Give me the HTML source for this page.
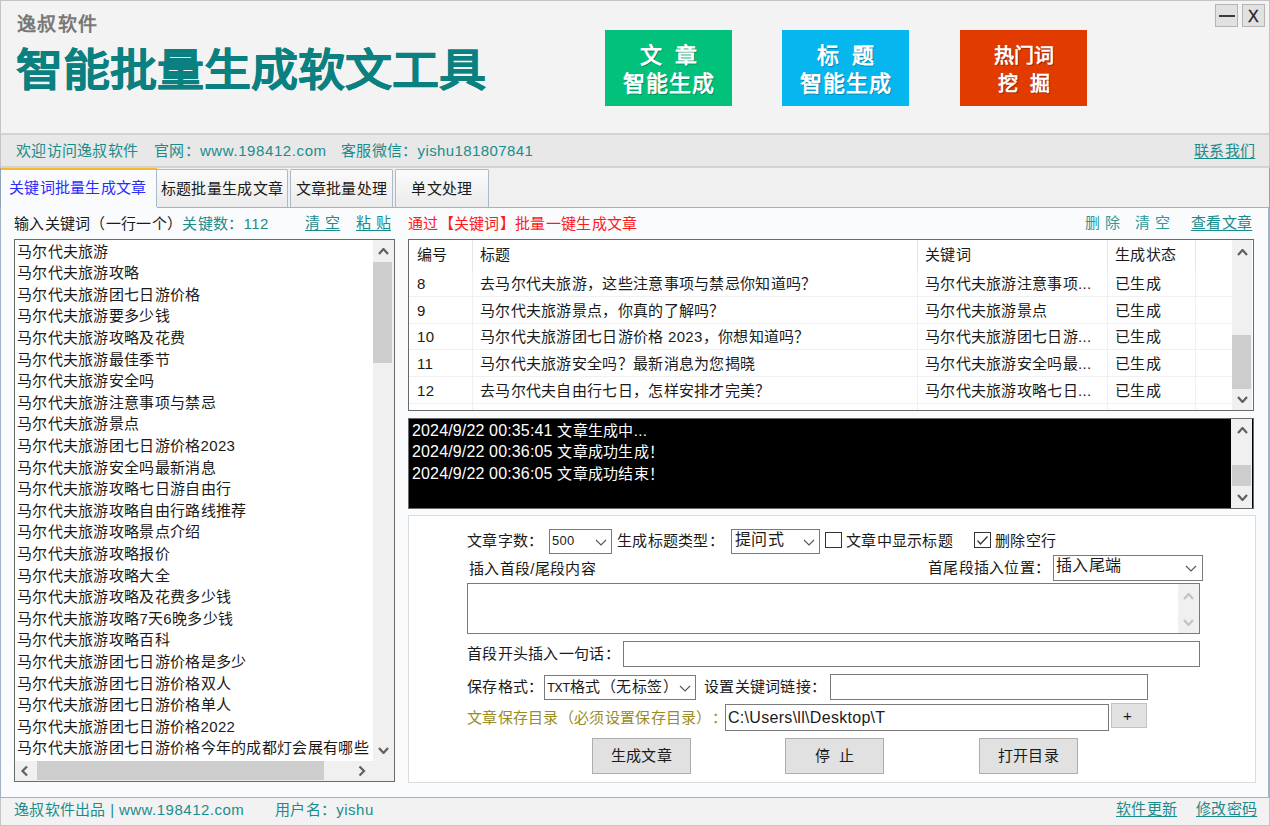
<!DOCTYPE html><html lang="zh-CN"><head><meta charset="utf-8"><style>
*{margin:0;padding:0;box-sizing:border-box}
html,body{width:1270px;height:826px;overflow:hidden;background:#f3f3f3;font-family:"Liberation Sans",sans-serif;color:#1a1a1a;text-spacing-trim:space-all}
.t{position:absolute;white-space:nowrap;font-size:15px;line-height:16px;letter-spacing:0.3px}
.r{position:absolute}
.teal{color:#1b8c8c}
.u{text-decoration:underline;text-underline-offset:2px;text-decoration-thickness:1.3px}
</style></head><body>
<div class="r" style="left:0px;top:0px;width:1270px;height:826px;border:1px solid #c4c4c4"></div>
<div class="t " style="left:17px;top:14.5px;font-size:19px;line-height:20px;color:#787878;letter-spacing:1.3px;font-weight:bold">逸叔软件</div>
<div class="t " style="left:16px;top:45.5px;font-size:47px;line-height:47px;font-weight:900;letter-spacing:0;color:#0b8080;-webkit-text-stroke:0.4px #0b8080;transform:scaleY(0.94);transform-origin:0 46px">智能批量生成软文工具</div>
<div class="r" style="left:605px;top:30px;width:127px;height:76px;background:#02c27b"></div>
<div class="r" style="left:782px;top:30px;width:127px;height:76px;background:#06b7ef"></div>
<div class="r" style="left:960px;top:30px;width:127px;height:76px;background:#e23b00"></div>
<div style="position:absolute;white-space:nowrap;color:#fff;font-weight:900;line-height:24px;text-shadow:1px 1px 0 rgba(0,0,0,0.28);left:605px;top:43.5px;width:127px;text-align:center;font-size:22px;letter-spacing:1px;text-indent:1px">文&ensp;章</div>
<div style="position:absolute;white-space:nowrap;color:#fff;font-weight:900;line-height:24px;text-shadow:1px 1px 0 rgba(0,0,0,0.28);left:605px;top:71.5px;width:127px;text-align:center;font-size:22px;letter-spacing:1px;text-indent:1px">智能生成</div>
<div style="position:absolute;white-space:nowrap;color:#fff;font-weight:900;line-height:24px;text-shadow:1px 1px 0 rgba(0,0,0,0.28);left:782px;top:43.5px;width:127px;text-align:center;font-size:22px;letter-spacing:1px;text-indent:1px">标&ensp;题</div>
<div style="position:absolute;white-space:nowrap;color:#fff;font-weight:900;line-height:24px;text-shadow:1px 1px 0 rgba(0,0,0,0.28);left:782px;top:71.5px;width:127px;text-align:center;font-size:22px;letter-spacing:1px;text-indent:1px">智能生成</div>
<div style="position:absolute;white-space:nowrap;color:#fff;font-weight:900;line-height:24px;text-shadow:1px 1px 0 rgba(0,0,0,0.28);left:960px;top:44.0px;width:127px;text-align:center;font-size:20px;letter-spacing:0px">热门词</div>
<div style="position:absolute;white-space:nowrap;color:#fff;font-weight:900;line-height:24px;text-shadow:1px 1px 0 rgba(0,0,0,0.28);left:960px;top:72.0px;width:127px;text-align:center;font-size:20px;letter-spacing:1px;text-indent:1px">挖&ensp;掘</div>
<div class="r" style="left:1215px;top:4px;width:23px;height:23px;background:#e1e1e1;border:1px solid #b5b5b5"></div>
<div class="r" style="left:1219px;top:15px;width:16px;height:2px;background:#3a3a3a"></div>
<div class="r" style="left:1242px;top:4px;width:23px;height:23px;background:#e1e1e1;border:1px solid #b5b5b5"></div>
<div class="t " style="left:1248px;top:9px;font-size:16px;line-height:16px;color:#222;-webkit-text-stroke:0.3px #222">X</div>
<div class="r" style="left:1px;top:133px;width:1268px;height:2px;background:#d3d3d3"></div>
<div class="r" style="left:1px;top:135px;width:1268px;height:31px;background:#e8e8e8"></div>
<div class="r" style="left:1px;top:166px;width:1268px;height:2px;background:#d3d3d3"></div>
<div class="t teal" style="left:16px;top:143px;">欢迎访问逸叔软件</div>
<div class="t teal" style="left:154px;top:143px;">官网：<span style='letter-spacing:0.6px'>www.198412.com</span></div>
<div class="t teal" style="left:341px;top:143px;">客服微信：<span style='letter-spacing:0.4px'>yishu181807841</span></div>
<div class="t teal u" style="left:1194px;top:143px;">联系我们</div>
<div class="r" style="left:1px;top:168px;width:1268px;height:39px;background:#f0f0f0"></div>
<div class="r" style="left:0px;top:207px;width:1270px;height:591px;background:#fafbfd;border:1px solid #a0b2c4;border-right-width:2px"></div>
<div class="r" style="left:0px;top:168px;width:1px;height:40px;background:#90a4b7"></div>
<div class="r" style="left:1269px;top:168px;width:1px;height:40px;background:#90a4b7"></div>
<div class="r" style="left:1px;top:168px;width:156px;height:40px;background:#fafbfd;border-top:2px solid #f6b82c"></div>
<div class="t " style="left:9px;top:179.5px;color:#2b2bff">关键词批量生成文章</div>
<div class="r" style="left:156px;top:169px;width:132px;height:38px;background:linear-gradient(#fbfbfb,#ebebeb);border:1px solid #a9bacb;border-bottom:none;border-radius:2px 2px 0 0"></div>
<div class="r" style="left:156px;top:181px;width:132px;text-align:center;font-size:15px;letter-spacing:0.3px;line-height:16px;white-space:nowrap">标题批量生成文章</div>
<div class="r" style="left:290px;top:169px;width:103px;height:38px;background:linear-gradient(#fbfbfb,#ebebeb);border:1px solid #a9bacb;border-bottom:none;border-radius:2px 2px 0 0"></div>
<div class="r" style="left:290px;top:181px;width:103px;text-align:center;font-size:15px;letter-spacing:0.3px;line-height:16px;white-space:nowrap">文章批量处理</div>
<div class="r" style="left:395px;top:169px;width:94px;height:38px;background:linear-gradient(#fbfbfb,#ebebeb);border:1px solid #a9bacb;border-bottom:none;border-radius:2px 2px 0 0"></div>
<div class="r" style="left:395px;top:181px;width:94px;text-align:center;font-size:15px;letter-spacing:0.3px;line-height:16px;white-space:nowrap">单文处理</div>
<div class="t " style="left:14px;top:216px;">输入关键词（一行一个）<span class='teal'>关键数：<span style='letter-spacing:0.5px'>112</span></span></div>
<div class="t teal u" style="left:305px;top:215px;">清 空</div>
<div class="t teal u" style="left:356px;top:215px;">粘 贴</div>
<div class="r" style="left:14px;top:239px;width:381px;height:543px;background:#fff;border:1px solid #6a6a6a"></div>
<div class="r" style="left:15px;top:240px;width:358px;height:521px;overflow:hidden"><div class="t " style="left:2px;top:3.5px;">马尔代夫旅游</div>
<div class="t " style="left:2px;top:25.1px;">马尔代夫旅游攻略</div>
<div class="t " style="left:2px;top:46.7px;">马尔代夫旅游团七日游价格</div>
<div class="t " style="left:2px;top:68.30000000000001px;">马尔代夫旅游要多少钱</div>
<div class="t " style="left:2px;top:89.9px;">马尔代夫旅游攻略及花费</div>
<div class="t " style="left:2px;top:111.5px;">马尔代夫旅游最佳季节</div>
<div class="t " style="left:2px;top:133.10000000000002px;">马尔代夫旅游安全吗</div>
<div class="t " style="left:2px;top:154.70000000000002px;">马尔代夫旅游注意事项与禁忌</div>
<div class="t " style="left:2px;top:176.3px;">马尔代夫旅游景点</div>
<div class="t " style="left:2px;top:197.9px;">马尔代夫旅游团七日游价格2023</div>
<div class="t " style="left:2px;top:219.5px;">马尔代夫旅游安全吗最新消息</div>
<div class="t " style="left:2px;top:241.10000000000002px;">马尔代夫旅游攻略七日游自由行</div>
<div class="t " style="left:2px;top:262.70000000000005px;">马尔代夫旅游攻略自由行路线推荐</div>
<div class="t " style="left:2px;top:284.3px;">马尔代夫旅游攻略景点介绍</div>
<div class="t " style="left:2px;top:305.90000000000003px;">马尔代夫旅游攻略报价</div>
<div class="t " style="left:2px;top:327.5px;">马尔代夫旅游攻略大全</div>
<div class="t " style="left:2px;top:349.1px;">马尔代夫旅游攻略及花费多少钱</div>
<div class="t " style="left:2px;top:370.70000000000005px;">马尔代夫旅游攻略7天6晚多少钱</div>
<div class="t " style="left:2px;top:392.3px;">马尔代夫旅游攻略百科</div>
<div class="t " style="left:2px;top:413.90000000000003px;">马尔代夫旅游团七日游价格是多少</div>
<div class="t " style="left:2px;top:435.5px;">马尔代夫旅游团七日游价格双人</div>
<div class="t " style="left:2px;top:457.1px;">马尔代夫旅游团七日游价格单人</div>
<div class="t " style="left:2px;top:478.70000000000005px;">马尔代夫旅游团七日游价格2022</div>
<div class="t " style="left:2px;top:500.3px;">马尔代夫旅游团七日游价格今年的成都灯会展有哪些</div>
</div><div class="r" style="left:373px;top:240px;width:21px;height:541px;background:#f0f0f0"></div>
<div class="r" style="left:373px;top:262px;width:19px;height:101px;background:#cdcdcd"></div>
<svg class="r" style="left:378px;top:248px" width="11" height="7"><polyline points="1,6 5.5,1 10,6" fill="none" stroke="#606060" stroke-width="2.2"/></svg>
<svg class="r" style="left:378px;top:747px" width="11" height="7"><polyline points="1,1 5.5,6 10,1" fill="none" stroke="#606060" stroke-width="2.2"/></svg>
<div class="r" style="left:15px;top:761px;width:358px;height:20px;background:#f0f0f0"></div>
<div class="r" style="left:37px;top:761px;width:287px;height:19px;background:#cdcdcd"></div>
<svg class="r" style="left:20px;top:765px" width="9" height="12"><polyline points="7,1.5 2.5,6 7,10.5" fill="none" stroke="#606060" stroke-width="2.2"/></svg>
<svg class="r" style="left:358px;top:765px" width="9" height="12"><polyline points="1.5,1.5 6,6 1.5,10.5" fill="none" stroke="#606060" stroke-width="2.2"/></svg>
<div class="t " style="left:408px;top:216px;color:#ff1a1a">通过【关键词】批量一键生成文章</div>
<div class="t " style="left:1085px;top:215px;color:#2a9a9a">删 除</div>
<div class="t " style="left:1135px;top:215px;color:#2a9a9a">清 空</div>
<div class="t teal u" style="left:1191px;top:215px;">查看文章</div>
<div class="r" style="left:408px;top:239px;width:846px;height:172px;background:#fff;border:1px solid #6a6a6a"></div>
<div class="r" style="left:472px;top:240px;width:1px;height:31px;background:#e5e5e5"></div>
<div class="r" style="left:472px;top:271px;width:1px;height:139px;background:#f0f0f0"></div>
<div class="r" style="left:917px;top:240px;width:1px;height:31px;background:#e5e5e5"></div>
<div class="r" style="left:917px;top:271px;width:1px;height:139px;background:#f0f0f0"></div>
<div class="r" style="left:1107px;top:240px;width:1px;height:31px;background:#e5e5e5"></div>
<div class="r" style="left:1107px;top:271px;width:1px;height:139px;background:#f0f0f0"></div>
<div class="r" style="left:1195px;top:240px;width:1px;height:31px;background:#e5e5e5"></div>
<div class="r" style="left:1195px;top:271px;width:1px;height:139px;background:#f0f0f0"></div>
<div class="t " style="left:417px;top:247px;">编号</div>
<div class="t " style="left:480px;top:247px;">标题</div>
<div class="t " style="left:925px;top:247px;">关键词</div>
<div class="t " style="left:1115px;top:247px;">生成状态</div>
<div class="r" style="left:409px;top:296.0px;width:823px;height:1px;background:#f0f0f0"></div>
<div class="t " style="left:417px;top:276.0px;letter-spacing:0.3px">8</div>
<div class="t " style="left:480px;top:276.0px;">去马尔代夫旅游，这些注意事项与禁忌你知道吗？</div>
<div class="t " style="left:925px;top:276.0px;">马尔代夫旅游注意事项...</div>
<div class="t " style="left:1115px;top:276.0px;">已生成</div>
<div class="r" style="left:409px;top:322.7px;width:823px;height:1px;background:#f0f0f0"></div>
<div class="t " style="left:417px;top:302.7px;letter-spacing:0.3px">9</div>
<div class="t " style="left:480px;top:302.7px;">马尔代夫旅游景点，你真的了解吗？</div>
<div class="t " style="left:925px;top:302.7px;">马尔代夫旅游景点</div>
<div class="t " style="left:1115px;top:302.7px;">已生成</div>
<div class="r" style="left:409px;top:349.4px;width:823px;height:1px;background:#f0f0f0"></div>
<div class="t " style="left:417px;top:329.4px;letter-spacing:0.3px">10</div>
<div class="t " style="left:480px;top:329.4px;">马尔代夫旅游团七日游价格 2023，你想知道吗？</div>
<div class="t " style="left:925px;top:329.4px;">马尔代夫旅游团七日游...</div>
<div class="t " style="left:1115px;top:329.4px;">已生成</div>
<div class="r" style="left:409px;top:376.1px;width:823px;height:1px;background:#f0f0f0"></div>
<div class="t " style="left:417px;top:356.1px;letter-spacing:0.3px">11</div>
<div class="t " style="left:480px;top:356.1px;">马尔代夫旅游安全吗？最新消息为您揭晓</div>
<div class="t " style="left:925px;top:356.1px;">马尔代夫旅游安全吗最...</div>
<div class="t " style="left:1115px;top:356.1px;">已生成</div>
<div class="r" style="left:409px;top:402.8px;width:823px;height:1px;background:#f0f0f0"></div>
<div class="t " style="left:417px;top:382.8px;letter-spacing:0.3px">12</div>
<div class="t " style="left:480px;top:382.8px;">去马尔代夫自由行七日，怎样安排才完美？</div>
<div class="t " style="left:925px;top:382.8px;">马尔代夫旅游攻略七日...</div>
<div class="t " style="left:1115px;top:382.8px;">已生成</div>
<div class="r" style="left:1232px;top:240px;width:20px;height:170px;background:#f0f0f0"></div>
<div class="r" style="left:1232px;top:335px;width:19px;height:54px;background:#cdcdcd"></div>
<svg class="r" style="left:1237px;top:249px" width="11" height="7"><polyline points="1,6 5.5,1 10,6" fill="none" stroke="#606060" stroke-width="2.2"/></svg>
<svg class="r" style="left:1237px;top:396px" width="11" height="7"><polyline points="1,1 5.5,6 10,1" fill="none" stroke="#606060" stroke-width="2.2"/></svg>
<div class="r" style="left:408px;top:418px;width:846px;height:91px;background:#000;border:1px solid #6a6a6a"></div>
<div class="t " style="left:412px;top:423.0px;color:#fff;line-height:16px"><span style='font-size:16px;letter-spacing:0.15px'>2024/9/22 00:35:41 </span>文章生成中...</div>
<div class="t " style="left:412px;top:444.3px;color:#fff;line-height:16px"><span style='font-size:16px;letter-spacing:0.15px'>2024/9/22 00:36:05 </span>文章成功生成！</div>
<div class="t " style="left:412px;top:465.6px;color:#fff;line-height:16px"><span style='font-size:16px;letter-spacing:0.15px'>2024/9/22 00:36:05 </span>文章成功结束！</div>
<div class="r" style="left:1231px;top:419px;width:21px;height:89px;background:#f0f0f0"></div>
<div class="r" style="left:1232px;top:465px;width:19px;height:21px;background:#cdcdcd"></div>
<svg class="r" style="left:1237px;top:427px" width="11" height="7"><polyline points="1,6 5.5,1 10,6" fill="none" stroke="#606060" stroke-width="2.2"/></svg>
<svg class="r" style="left:1237px;top:494px" width="11" height="7"><polyline points="1,1 5.5,6 10,1" fill="none" stroke="#606060" stroke-width="2.2"/></svg>
<div class="r" style="left:408px;top:515px;width:848px;height:268px;background:#fff;border:1px solid #dcdcdc"></div>
<div class="t " style="left:467px;top:533px;">文章字数：</div>
<div class="r" style="left:549px;top:529px;width:63px;height:25px;border:1px solid #7a7a7a;background:#fff"></div>
<div class="t " style="left:552px;top:533px;font-size:13px">500</div>
<svg class="r" style="left:595px;top:539px" width="12" height="7"><polyline points="1,1 6.0,6 11,1" fill="none" stroke="#555" stroke-width="1.1"/></svg>
<div class="t " style="left:617px;top:533px;">生成标题类型：</div>
<div class="r" style="left:731px;top:529px;width:89px;height:25px;border:1px solid #7a7a7a;background:#fff"></div>
<div class="t " style="left:735px;top:532px;font-size:16px">提问式</div>
<svg class="r" style="left:803px;top:539px" width="12" height="7"><polyline points="1,1 6.0,6 11,1" fill="none" stroke="#555" stroke-width="1.1"/></svg>
<div class="r" style="left:825px;top:532px;width:17px;height:16px;border:1px solid #333;background:#fff"></div>
<div class="t " style="left:846px;top:533px;">文章中显示标题</div>
<div class="r" style="left:974px;top:532px;width:17px;height:16px;border:1px solid #333;background:#fff"></div>
<svg class="r" style="left:976px;top:535px" width="13" height="11"><polyline points="1.5,5.5 4.5,9 11.5,1.5" fill="none" stroke="#333" stroke-width="1.3"/></svg>
<div class="t " style="left:995px;top:533px;">删除空行</div>
<div class="t " style="left:469px;top:561px;">插入首段/尾段内容</div>
<div class="t " style="left:928px;top:560px;">首尾段插入位置：</div>
<div class="r" style="left:1053px;top:555px;width:150px;height:26px;border:1px solid #7a7a7a;background:#fff"></div>
<div class="t " style="left:1056px;top:558px;font-size:16px">插入尾端</div>
<svg class="r" style="left:1185px;top:565px" width="12" height="7"><polyline points="1,1 6.0,6 11,1" fill="none" stroke="#555" stroke-width="1.1"/></svg>
<div class="r" style="left:467px;top:583px;width:733px;height:51px;border:1px solid #7a7a7a;background:#fff"></div>
<div class="r" style="left:1178px;top:584px;width:21px;height:49px;background:#f0f0f0"></div>
<svg class="r" style="left:1183px;top:593px" width="11" height="7"><polyline points="1,6 5.5,1 10,6" fill="none" stroke="#c2c2c2" stroke-width="2.2"/></svg>
<svg class="r" style="left:1183px;top:619px" width="11" height="7"><polyline points="1,1 5.5,6 10,1" fill="none" stroke="#c2c2c2" stroke-width="2.2"/></svg>
<div class="t " style="left:467px;top:646px;">首段开头插入一句话：</div>
<div class="r" style="left:623px;top:641px;width:577px;height:26px;border:1px solid #7a7a7a;background:#fff"></div>
<div class="t " style="left:467px;top:679px;">保存格式：</div>
<div class="r" style="left:544px;top:675px;width:152px;height:25px;border:1px solid #7a7a7a;background:#fff"></div>
<div class="t " style="left:547px;top:679px;letter-spacing:0.5px"><span style='font-family:"Liberation Mono",monospace;font-size:13.5px;letter-spacing:-0.5px'>TXT</span>格式（无标签）</div>
<svg class="r" style="left:679px;top:685px" width="12" height="7"><polyline points="1,1 6.0,6 11,1" fill="none" stroke="#555" stroke-width="1.1"/></svg>
<div class="t " style="left:704px;top:679px;">设置关键词链接：</div>
<div class="r" style="left:830px;top:674px;width:318px;height:26px;border:1px solid #7a7a7a;background:#fff"></div>
<div class="t " style="left:467px;top:710px;color:#9a8c22">文章保存目录（必须设置保存目录）：</div>
<div class="r" style="left:725px;top:704px;width:384px;height:27px;border:1px solid #7a7a7a;background:#fff"></div>
<div class="t " style="left:728px;top:710px;font-size:16px;letter-spacing:0.3px">C:\Users\ll\Desktop\T</div>
<div class="r" style="left:1111px;top:703px;width:36px;height:25px;border:1px solid #c2c2c2;background:#e1e1e1"></div>
<div class="t " style="left:1123px;top:708px;font-size:15px">+</div>
<div class="r" style="left:592px;top:738px;width:99px;height:36px;background:#e1e1e1;border:1px solid #adadad;text-align:center;font-size:15px;letter-spacing:0.3px;line-height:34px">生成文章</div>
<div class="r" style="left:785px;top:738px;width:99px;height:36px;background:#e1e1e1;border:1px solid #adadad;text-align:center;font-size:15px;letter-spacing:0.3px;line-height:34px">停&nbsp;&nbsp;止</div>
<div class="r" style="left:979px;top:738px;width:99px;height:36px;background:#e1e1e1;border:1px solid #adadad;text-align:center;font-size:15px;letter-spacing:0.3px;line-height:34px">打开目录</div>
<div class="r" style="left:1px;top:798px;width:1268px;height:27px;background:#f2f2f2"></div>
<div class="t teal" style="left:14px;top:802px;">逸叔软件出品 | <span style='letter-spacing:0.5px'>www.198412.com</span></div>
<div class="t teal" style="left:275px;top:802px;">用户名：<span style='letter-spacing:0.5px'>yishu</span></div>
<div class="t teal u" style="left:1116px;top:801px;">软件更新</div>
<div class="t teal u" style="left:1196px;top:801px;">修改密码</div>
</body></html>
